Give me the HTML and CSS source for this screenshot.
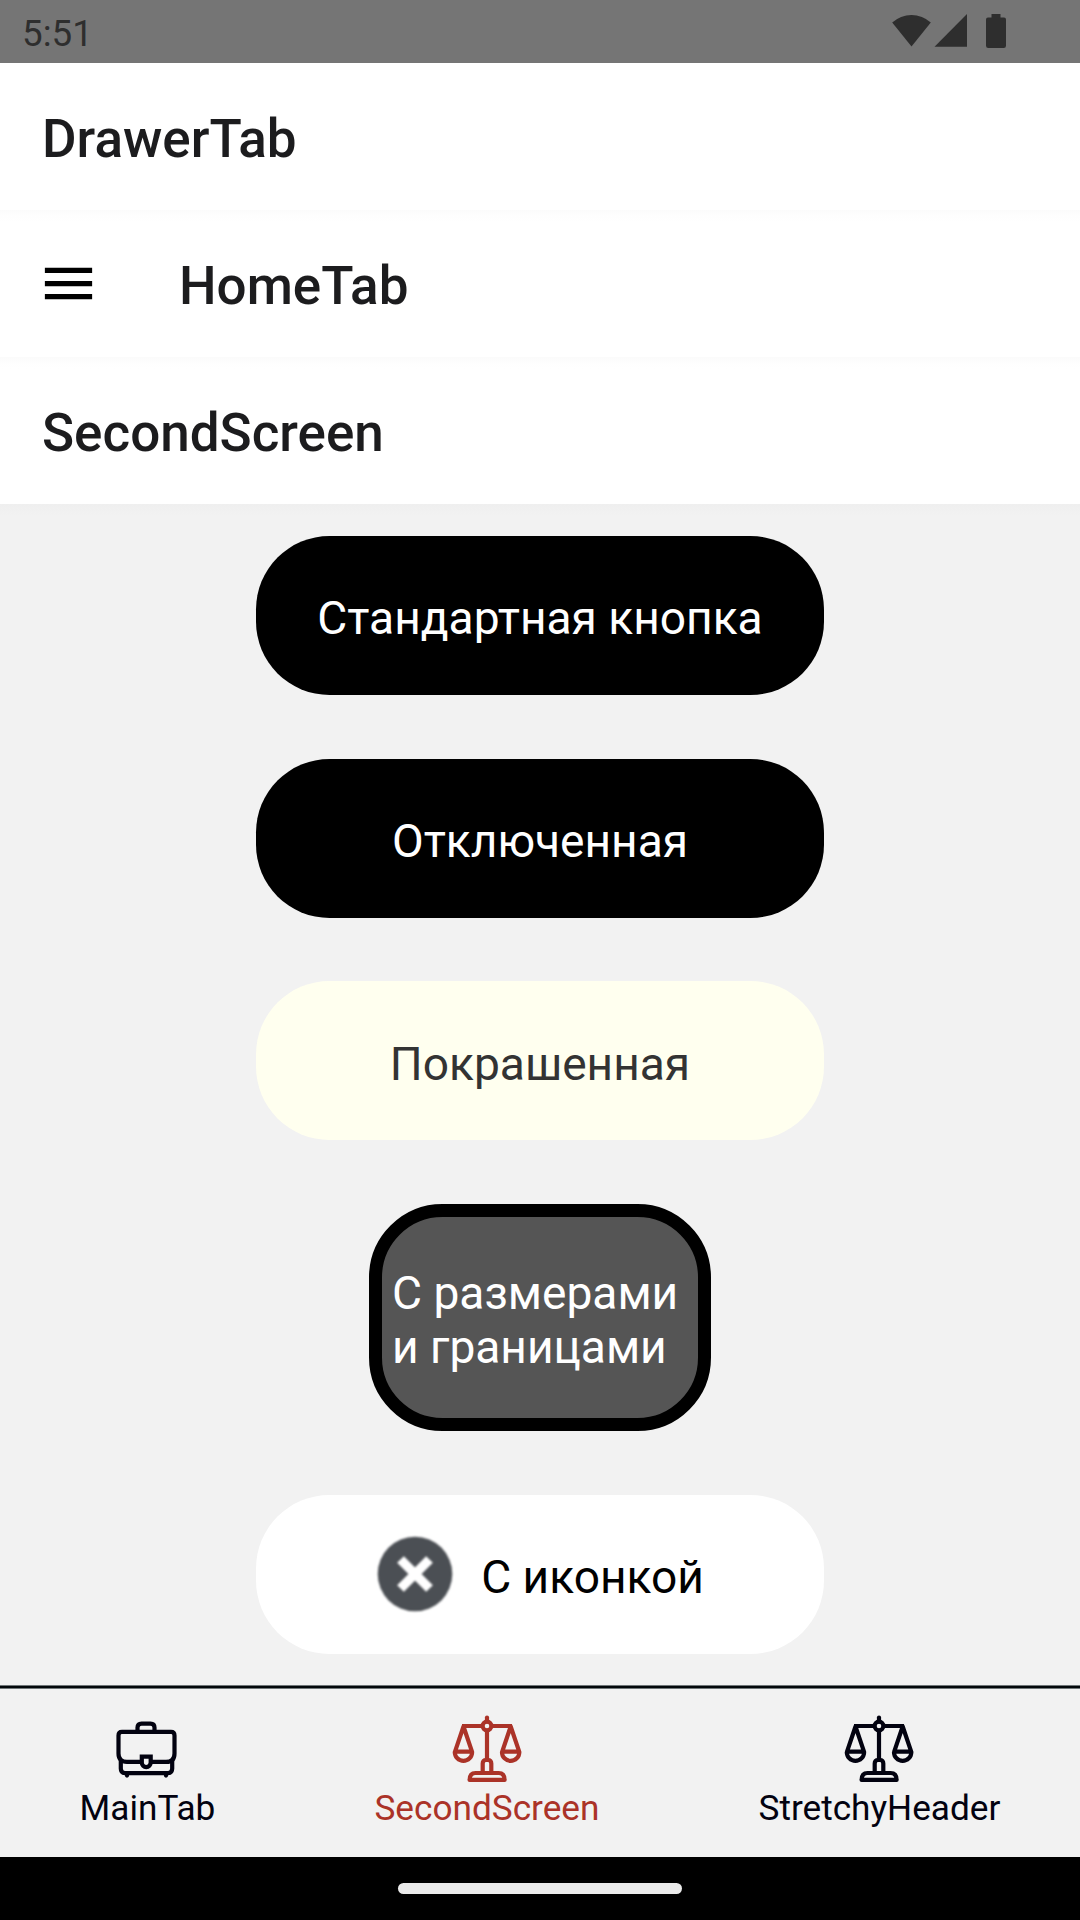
FILE: index.html
```html
<!DOCTYPE html>
<html lang="ru">
<head>
<meta charset="utf-8">
<title>SecondScreen</title>
<link rel="stylesheet" href="styles.css">
</head>
<body>
<div class="screen">
  <div class="status">
    <span class="clock">5:51</span>
    <svg class="status-icons" width="116" height="34" viewBox="0 0 116 34" fill="#2e2e2e">
      <path d="M0.2 8.6A28.5 28.5 0 0 1 38.8 8.6L19.5 32.5Z"/>
      <path d="M42.5 32.8H75V0Z"/>
      <path d="M99.5 0h9v3.500h3.500a2 2 0 0 1 2 2v26.200a2.300 2.300 0 0 1-2.300 2.300h-15.400a2.300 2.300 0 0 1-2.300-2.300v-26.200a2 2 0 0 1 2-2h3.500z"/>
    </svg>
  </div>
  <header class="bar"><h1 class="title">DrawerTab</h1></header>
  <header class="bar bar-nested">
    <svg class="menu" width="63" height="63" viewBox="0 0 24 24"><path d="M3 18h18v-2H3v2zm0-5h18v-2H3v2zm0-7v2h18V6H3z"/></svg>
    <h1 class="title">HomeTab</h1>
  </header>
  <header class="bar bar-nested"><h1 class="title">SecondScreen</h1></header>
  <main class="content">
    <button class="btn">Стандартная кнопка</button>
    <button class="btn">Отключенная</button>
    <button class="btn btn-colored">Покрашенная</button>
    <button class="btn btn-sized">С размерами<br>и границами</button>
    <button class="btn btn-icon">
      <svg class="close" width="78" height="78" viewBox="0 0 78 78"><circle cx="39" cy="39" r="37.300" fill="#4b4f54"/><path d="M24.500 24.500L53.500 53.500M53.500 24.500L24.500 53.500" stroke="#fff" stroke-width="9.500"/></svg>
      <span>С иконкой</span>
    </button>
  </main>
  <nav class="tabs">
    <a class="tab">
      <svg width="70" height="70" viewBox="0 0 70 70" fill="none" stroke="currentColor" stroke-width="4.200">
        <g transform="translate(0 1.600)">
          <path d="M25.500 16v-4q0-4 4-4h9q4 0 4 4v4"/>
          <path d="M10 16.300h49q3.500 0 3.500 3.500v18q0 8.500-8.500 8.500h-39q-8.500 0-8.500-8.500v-18q0-3.500 3.500-3.500z"/>
          <path d="M8.800 44v9q0 4.500 4 4.500h43.400q4 0 4-4.500v-9"/>
          <path d="M29.800 41h8.900v6a4.450 4.450 0 0 1-8.900 0z" fill="#f2f2f2"/>
          <path d="M15 59.500v.5M54 59.500v.5" stroke-linecap="round"/>
        </g>
      </svg>
      <span>MainTab</span>
    </a>
    <a class="tab tab-active">
      <svg width="70" height="70" viewBox="0 0 70 70" fill="none" stroke="currentColor" stroke-width="4.200">
        <use href="#scales"/>
      </svg>
      <span>SecondScreen</span>
    </a>
    <a class="tab">
      <svg width="70" height="70" viewBox="0 0 70 70" fill="none" stroke="currentColor" stroke-width="4.200">
        <g id="scales">
          <circle cx="35" cy="12" r="4.400"/>
          <path d="M35 3.500v4" stroke-linecap="round"/>
          <path d="M10 12h20.500M39.500 12h20.500M35 16.500v29"/>
          <path d="M11.500 12.500L3 37.700h17zM58.700 12.500L50.200 37.700h17z" stroke-linejoin="round"/>
          <path d="M2.800 37.700v.5a8.650 8.650 0 0 0 17.300 0v-.5M50 37.700v.5a8.650 8.650 0 0 0 17.300 0v-.5"/>
          <path d="M30.700 59V49.500q0-3.500 3.500-3.500h1.600q3.500 0 3.500 3.500v9.500"/>
          <path d="M17.600 65.900q0-6.900 6-6.900h23q6 0 6 6.900z" stroke-linejoin="round"/>
        </g>
      </svg>
      <span>StretchyHeader</span>
    </a>
  </nav>
  <div class="gesture"><div class="pill"></div></div>
</div>
</body>
</html>
```
FILE: styles.css
```css
* { box-sizing: border-box; }
body { margin: 0; }
.screen {
  width: 1080px;
  height: 1920px;
  display: flex;
  flex-direction: column;
  background: #f2f2f2;
  font-family: Roboto, "Noto Sans", sans-serif;
  overflow: hidden;
}
.status {
  height: 63px;
  flex: none;
  display: flex;
  align-items: center;
  justify-content: space-between;
  padding: 0 72px 0 22px;
  background: #757575;
  color: #2e2e2e;
}
.clock { font-size: 36.75px; line-height: 43px; padding-top: 4px; }
.status-icons { margin-top: -2px; }
.bar {
  height: 147px;
  flex: none;
  display: flex;
  align-items: center;
  padding: 0 42px;
  background: #fff;
}
.bar-nested { background: linear-gradient(#fbfbfb, #fefefe 6px, #fff 12px); }
.menu { margin-left: -5px; margin-right: 79px; }
.title {
  margin: 0;
  padding-top: 5px;
  font-size: 53px;
  font-weight: 500;
  line-height: 62px;
  color: #1c1c1e;
}
.content {
  height: 1181px;
  flex: none;
  display: flex;
  flex-direction: column;
  align-items: center;
  gap: 63.7px;
  padding-top: 32px;
  background: linear-gradient(#efefef, #f2f2f2 12px);
}
.btn {
  width: 568px;
  height: 159px;
  flex: none;
  display: flex;
  align-items: center;
  justify-content: center;
  padding: 5.6px 0 0;
  border: 0;
  border-radius: 73.5px;
  background: #000;
  color: #fff;
  font: 400 46.1px/54px Roboto, "Noto Sans", sans-serif;
}
.btn-colored { background: #ffffef; color: #333; }
.btn-sized {
  width: 342px;
  height: 227px;
  justify-content: flex-start;
  padding: 4.6px 0 0 10px;
  border: 13px solid #000;
  background: #555;
  text-align: left;
}
.btn-icon { background: #fff; color: #000; gap: 27px; }
.close { margin-top: -6px; filter: blur(.8px); }
.tabs {
  height: 172px;
  flex: none;
  display: flex;
  justify-content: space-around;
  padding-top: 29px;
  background: linear-gradient(#6f7678 1px, #03080b 1px 3px, #6f7678 3px 4px, #f2f2f2 4px);
  color: #020210;
}
.tab {
  display: flex;
  flex-direction: column;
  align-items: center;
  gap: 4px;
  font-size: 35.2px;
  line-height: 40px;
}
.tab-active { color: #ab3328; }
.gesture {
  height: 63px;
  flex: none;
  display: flex;
  justify-content: center;
  align-items: center;
  background: #000;
}
.pill { width: 284px; height: 10.5px; border-radius: 6px; background: #ebebeb; }
```
